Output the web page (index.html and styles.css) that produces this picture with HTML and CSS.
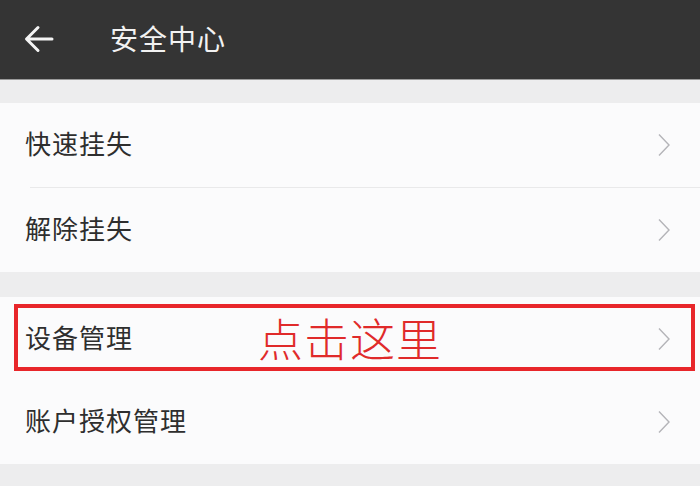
FILE: index.html
```html
<!DOCTYPE html>
<html lang="zh-CN">
<head>
<meta charset="utf-8">
<title>安全中心</title>
<link rel="stylesheet" href="styles.css">
</head>
<body>
<div class="page">
  <header class="topbar">
    <svg class="back" width="30" height="30" viewBox="0 0 30 30" aria-hidden="true">
      <path d="M28 15 H3 M14 3.5 L2.5 15 L14 26.5" fill="none" stroke="#f4f4f4" stroke-width="3" stroke-linecap="round" stroke-linejoin="round"/>
    </svg>
    <h1 class="title">安全中心</h1>
  </header>

  <section class="group group-first">
    <div class="row">
      <span class="label">快速挂失</span>
      <svg class="chev" width="14" height="24" viewBox="0 0 14 24" aria-hidden="true"><path d="M2 1.5 L12 12 L2 22.5" fill="none" stroke="#b4b4b8" stroke-width="1.4"/></svg>
    </div>
    <div class="divider"></div>
    <div class="row">
      <span class="label">解除挂失</span>
      <svg class="chev" width="14" height="24" viewBox="0 0 14 24" aria-hidden="true"><path d="M2 1.5 L12 12 L2 22.5" fill="none" stroke="#b4b4b8" stroke-width="1.4"/></svg>
    </div>
  </section>

  <section class="group group-second">
    <div class="row row-marked">
      <span class="label">设备管理</span>
      <svg class="chev" width="14" height="24" viewBox="0 0 14 24" aria-hidden="true"><path d="M2 1.5 L12 12 L2 22.5" fill="none" stroke="#b4b4b8" stroke-width="1.4"/></svg>
      <div class="mark"><span class="mark-text">点击这里</span></div>
    </div>
    <div class="row">
      <span class="label">账户授权管理</span>
      <svg class="chev" width="14" height="24" viewBox="0 0 14 24" aria-hidden="true"><path d="M2 1.5 L12 12 L2 22.5" fill="none" stroke="#b4b4b8" stroke-width="1.4"/></svg>
    </div>
  </section>
</div>
</body>
</html>
```

FILE: styles.css
```css
* { box-sizing: border-box; }
html, body {
  margin: 0;
  padding: 0;
}
body {
  width: 700px;
  height: 486px;
  overflow: hidden;
  background: #ededee;
  font-family: "Noto Sans CJK SC", "Noto Sans", sans-serif;
}
.page {
  display: flex;
  flex-direction: column;
}
.topbar {
  height: 80px;
  background: #343434;
  display: flex;
  align-items: center;
  padding-left: 24px;
  border-bottom: 1px solid #9a9a9a;
}
.back {
  display: block;
  margin-top: -2px;
}
.title {
  margin: 0 0 0 56px;
  font-size: 28px;
  font-weight: 400;
  color: #f2f2f2;
  letter-spacing: 1px;
  line-height: 1;
  margin-top: -3px;
}
.group {
  background: #fbfbfc;
  display: flex;
  flex-direction: column;
}
.group-first { margin-top: 23px; }
.group-second { margin-top: 25px; }
.row {
  position: relative;
  height: 84px;
  display: flex;
  align-items: center;
  justify-content: space-between;
  padding: 0 29px 0 25px;
}
.label {
  font-size: 26px;
  color: #2e2e2e;
  letter-spacing: 1px;
  line-height: 1;
  margin-bottom: 4px;
}
.chev { display: block; }
.divider {
  height: 1px;
  margin-left: 30px;
  background: #e9e9ea;
}
.row-marked { height: 83px; }
.mark {
  position: absolute;
  left: 14px;
  right: 5px;
  top: 7px;
  bottom: 9px;
  border: 4px solid #e8262a;
  display: flex;
  align-items: center;
  padding-left: 240px;
}
.mark-text {
  font-size: 45px;
  font-weight: 300;
  color: #e02a2a;
  line-height: 1;
  letter-spacing: 1px;
}
```
